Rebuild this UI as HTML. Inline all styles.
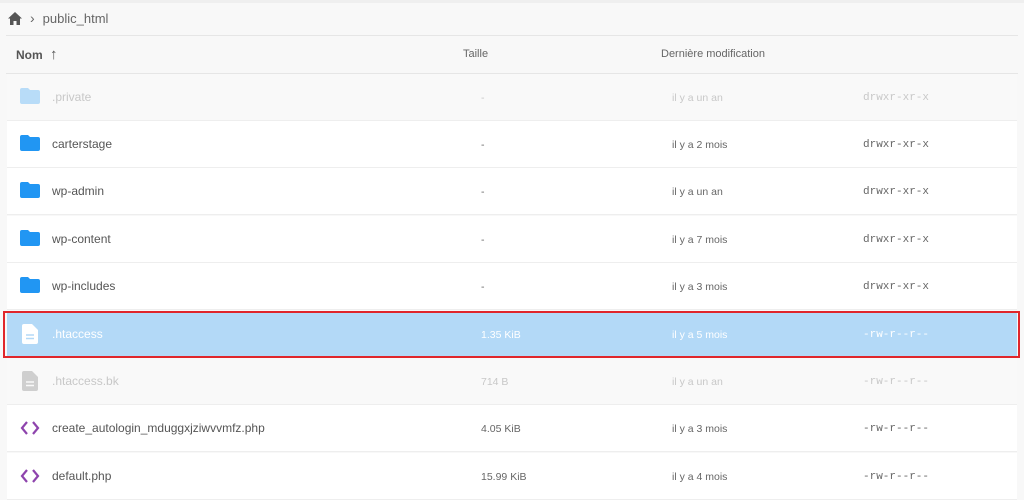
<!DOCTYPE html>
<html><head><meta charset="utf-8"><style>
*{margin:0;padding:0;box-sizing:border-box}
body{width:1024px;height:500px;background:#f8f8f8;font-family:"Liberation Sans",sans-serif;position:relative;overflow:hidden}
.top{position:absolute;left:0;top:0;width:1024px;height:3px;background:#efefef}
.crumb{position:absolute;left:8px;top:9px;height:18px;display:flex;align-items:center;font-size:13px;color:#666}
.hline{position:absolute;left:6px;width:1012px;height:1px;background:#e6e6e6}
.hdr{position:absolute;top:48px;font-size:11px;color:#666}
.row{position:absolute;left:7px;width:1010px;height:47px;background:#fff;border-bottom:1px solid #eee}
.row.dim{background:#f9f9f9}
.row .ic{position:absolute;left:13px;top:14px}
.row .n{position:absolute;left:45px;top:16px;font-size:12px;color:#555}
.row .s{position:absolute;left:474px;top:18px;font-size:10.5px;color:#666}
.row .d{position:absolute;left:665px;top:18px;font-size:10.5px;color:#666}
.row .p{position:absolute;left:856px;top:18px;font-size:11px;color:#666;font-family:"Liberation Mono",monospace}
.row.dim .n,.row.dim .s,.row.dim .d,.row.dim .p{color:#c8c8c8}
.row.sel{background:#b3d9f7}
.row.sel .n,.row.sel .s,.row.sel .d,.row.sel .p{color:#fff}
.red{position:absolute;left:3px;top:311px;width:1017px;height:47px;border:2px solid #e0262b}
</style></head><body>
<div class="top"></div>
<div class="crumb"><svg width="14" height="13" viewBox="0 0 14 13"><path d="M7 0L0 6.5h2V13h3.5V9h3v4H12V6.5h2z" fill="#555"/></svg><span style="margin:0 8px 0 8px;font-size:14px">›</span>public_html</div>
<div class="hline" style="top:35px"></div>
<div class="hdr" style="left:16px;top:46px;font-weight:bold;font-size:12px;color:#555">Nom <span style="font-weight:normal;font-size:15px;margin-left:4px">↑</span></div>
<div class="hdr" style="left:463px">Taille</div>
<div class="hdr" style="left:661px">Dernière modification</div>
<div class="hline" style="top:73px"></div>

<div class="row dim" style="top:74px"><svg class="ic" width="20" height="16" viewBox="0 0 20 16"><path d="M2 0h6l2 2h8a2 2 0 0 1 2 2v10a2 2 0 0 1-2 2H2a2 2 0 0 1-2-2V2a2 2 0 0 1 2-2z" fill="#b8dcf8"/></svg><span class="n">.private</span><span class="s">-</span><span class="d">il y a un an</span><span class="p">drwxr-xr-x</span></div>
<div class="row" style="top:121px"><svg class="ic" width="20" height="16" viewBox="0 0 20 16"><path d="M2 0h6l2 2h8a2 2 0 0 1 2 2v10a2 2 0 0 1-2 2H2a2 2 0 0 1-2-2V2a2 2 0 0 1 2-2z" fill="#2196f3"/></svg><span class="n">carterstage</span><span class="s">-</span><span class="d">il y a 2 mois</span><span class="p">drwxr-xr-x</span></div>
<div class="row" style="top:168px"><svg class="ic" width="20" height="16" viewBox="0 0 20 16"><path d="M2 0h6l2 2h8a2 2 0 0 1 2 2v10a2 2 0 0 1-2 2H2a2 2 0 0 1-2-2V2a2 2 0 0 1 2-2z" fill="#2196f3"/></svg><span class="n">wp-admin</span><span class="s">-</span><span class="d">il y a un an</span><span class="p">drwxr-xr-x</span></div>
<div class="row" style="top:216px"><svg class="ic" width="20" height="16" viewBox="0 0 20 16"><path d="M2 0h6l2 2h8a2 2 0 0 1 2 2v10a2 2 0 0 1-2 2H2a2 2 0 0 1-2-2V2a2 2 0 0 1 2-2z" fill="#2196f3"/></svg><span class="n">wp-content</span><span class="s">-</span><span class="d">il y a 7 mois</span><span class="p">drwxr-xr-x</span></div>
<div class="row" style="top:263px"><svg class="ic" width="20" height="16" viewBox="0 0 20 16"><path d="M2 0h6l2 2h8a2 2 0 0 1 2 2v10a2 2 0 0 1-2 2H2a2 2 0 0 1-2-2V2a2 2 0 0 1 2-2z" fill="#2196f3"/></svg><span class="n">wp-includes</span><span class="s">-</span><span class="d">il y a 3 mois</span><span class="p">drwxr-xr-x</span></div>
<div class="row sel" style="top:311px"><svg class="ic" style="left:15px;top:13px" width="16" height="20" viewBox="0 0 16 20"><path d="M2 0h8l6 6v12a2 2 0 0 1-2 2H2a2 2 0 0 1-2-2V2a2 2 0 0 1 2-2z" fill="#fff"/><path d="M4 11h8M4 14.5h8" stroke="#b3d9f7" stroke-width="1.6"/></svg><span class="n">.htaccess</span><span class="s">1.35 KiB</span><span class="d">il y a 5 mois</span><span class="p">-rw-r--r--</span></div>
<div class="row dim" style="top:358px"><svg class="ic" style="left:15px;top:13px" width="16" height="20" viewBox="0 0 16 20"><path d="M2 0h8l6 6v12a2 2 0 0 1-2 2H2a2 2 0 0 1-2-2V2a2 2 0 0 1 2-2z" fill="#cfcfcf"/><path d="M4 11h8M4 14.5h8" stroke="#f9f9f9" stroke-width="1.6"/></svg><span class="n">.htaccess.bk</span><span class="s">714 B</span><span class="d">il y a un an</span><span class="p">-rw-r--r--</span></div>
<div class="row" style="top:405px"><svg class="ic" style="top:16px" width="20" height="14" viewBox="0 0 20 14"><path d="M7 1L2 7l5 6M13 1l5 6-5 6" fill="none" stroke="#8e44ad" stroke-width="2.2"/></svg><span class="n">create_autologin_mduggxjziwvvmfz.php</span><span class="s">4.05 KiB</span><span class="d">il y a 3 mois</span><span class="p">-rw-r--r--</span></div>
<div class="row" style="top:453px"><svg class="ic" style="top:16px" width="20" height="14" viewBox="0 0 20 14"><path d="M7 1L2 7l5 6M13 1l5 6-5 6" fill="none" stroke="#8e44ad" stroke-width="2.2"/></svg><span class="n">default.php</span><span class="s">15.99 KiB</span><span class="d">il y a 4 mois</span><span class="p">-rw-r--r--</span></div>
<div class="red"></div>
</body></html>
